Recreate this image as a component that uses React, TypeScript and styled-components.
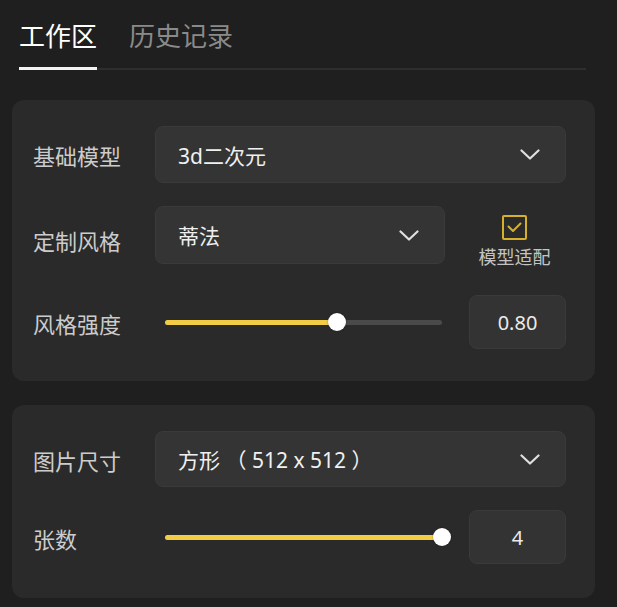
import React, { useState } from "react";
import styled, { createGlobalStyle } from "styled-components";

const GlobalStyle = createGlobalStyle`
  html, body {
    margin: 0;
    padding: 0;
    background: #1f1f1f;
  }
  body {
    font-family: "Noto Sans", "Noto Sans CJK SC", sans-serif;
    color: #e6e6e6;
  }
`;

const Page = styled.div`
  width: 617px;
  min-height: 607px;
  box-sizing: border-box;
  padding: 18px 22px 10px 12px;
  background: #1f1f1f;
`;

const TabList = styled.div`
  display: flex;
  gap: 32px;
  margin: 0 9px 0 7px;
  border-bottom: 2px solid #2e2e2e;
`;

const Tab = styled.div<{ $active?: boolean }>`
  font-size: 26px;
  line-height: 36px;
  padding-bottom: 13px;
  margin-bottom: -2px;
  color: ${(p) => (p.$active ? "#ffffff" : "#8a8a8a")};
  border-bottom: 3px solid ${(p) => (p.$active ? "#f2f2f2" : "transparent")};
  cursor: pointer;
`;

const Panel = styled.div<{ $top?: number; $bottom: number }>`
  margin-top: ${(p) => p.$top ?? 24}px;
  background: #2a2a2a;
  border-radius: 12px;
  padding: 26px 29px ${(p) => p.$bottom}px 21px;
  display: flex;
  flex-direction: column;
  gap: 23px;
`;

const Row = styled.div<{ $h: number }>`
  display: flex;
  align-items: center;
  height: ${(p) => p.$h}px;
`;

const Label = styled.div`
  width: 122px;
  flex-shrink: 0;
  font-size: 22px;
  color: #cccccc;
  padding-top: 1px;
`;

const Select = styled.div<{ $h: number }>`
  flex: 1;
  align-self: flex-start;
  height: ${(p) => p.$h}px;
  box-sizing: border-box;
  display: flex;
  align-items: center;
  justify-content: space-between;
  padding: 0 25px 0 22px;
  background: #343434;
  border: 1px solid #3a3a3a;
  border-radius: 8px;
  font-size: 21px;
  color: #f0f0f0;
  white-space: pre;
  cursor: pointer;
`;

const Side = styled.div`
  width: 103px;
  flex-shrink: 0;
  align-self: flex-start;
  margin: 9px 0 0 18px;
  display: flex;
  flex-direction: column;
  align-items: center;
`;

const CheckBox = styled.div`
  width: 25px;
  height: 25px;
  box-sizing: border-box;
  border: 2px solid #d4b02c;
  border-radius: 2px;
  display: flex;
  align-items: center;
  justify-content: center;
`;

const CheckText = styled.div`
  margin-top: 6px;
  font-size: 18px;
  line-height: 23px;
  color: #c4c4c4;
  white-space: nowrap;
`;

const SliderArea = styled.div`
  flex: 1;
  padding: 0 1px 0 10px;
  display: flex;
  align-items: center;
`;

const Track = styled.div`
  position: relative;
  flex: 1;
  height: 5px;
  border-radius: 3px;
  background: #4a4a4a;
`;

const Fill = styled.div`
  height: 100%;
  border-radius: 3px;
  background: #f2cc44;
`;

const Thumb = styled.div`
  position: absolute;
  top: 50%;
  width: 18px;
  height: 18px;
  margin: -9px 0 0 -9px;
  border-radius: 50%;
  background: #ffffff;
  box-shadow: 0 0 2px rgba(0, 0, 0, 0.4);
`;

const NumberBox = styled.div`
  width: 97px;
  height: 54px;
  flex-shrink: 0;
  margin-left: 26px;
  box-sizing: border-box;
  display: flex;
  align-items: center;
  justify-content: center;
  background: #333333;
  border: 1px solid #3a3a3a;
  border-radius: 8px;
  font-size: 20px;
  color: #eaeaea;
`;

const Chevron = () => (
  <svg width="20" height="11" viewBox="0 0 20 11" fill="none">
    <polyline
      points="1.5,1.5 10,9.5 18.5,1.5"
      stroke="#e0e0e0"
      strokeWidth="2.2"
      strokeLinecap="round"
      strokeLinejoin="round"
    />
  </svg>
);

function Slider({ value, min, max }: { value: number; min: number; max: number }) {
  const pct = ((value - min) / (max - min)) * 100;
  return (
    <SliderArea>
      <Track>
        <Fill style={{ width: `${pct}%` }} />
        <Thumb style={{ left: `${pct}%` }} />
      </Track>
    </SliderArea>
  );
}

export default function App() {
  const [tab, setTab] = useState(0);

  return (
    <Page>
      <GlobalStyle />
      <TabList>
        <Tab $active={tab === 0} onClick={() => setTab(0)}>
          工作区
        </Tab>
        <Tab $active={tab === 1} onClick={() => setTab(1)}>
          历史记录
        </Tab>
      </TabList>

      <Panel $top={30} $bottom={32}>
        <Row $h={57}>
          <Label>基础模型</Label>
          <Select $h={57}>
            <span>3d二次元</span>
            <Chevron />
          </Select>
        </Row>
        <Row $h={66}>
          <Label>定制风格</Label>
          <Select $h={58}>
            <span>蒂法</span>
            <Chevron />
          </Select>
          <Side>
            <CheckBox>
              <svg width="15" height="11" viewBox="0 0 15 11" fill="none">
                <polyline
                  points="1.5,4.5 6,9 13.5,1.5"
                  stroke="#d4b02c"
                  strokeWidth="2"
                  strokeLinecap="round"
                  strokeLinejoin="round"
                />
              </svg>
            </CheckBox>
            <CheckText>模型适配</CheckText>
          </Side>
        </Row>
        <Row $h={54}>
          <Label>风格强度</Label>
          <Slider value={0.62} min={0} max={1} />
          <NumberBox>0.80</NumberBox>
        </Row>
      </Panel>

      <Panel $bottom={34}>
        <Row $h={56}>
          <Label>图片尺寸</Label>
          <Select $h={56}>
            <span>方形 （ 512 x 512 ）</span>
            <Chevron />
          </Select>
        </Row>
        <Row $h={54}>
          <Label>张数</Label>
          <Slider value={4} min={1} max={4} />
          <NumberBox>4</NumberBox>
        </Row>
      </Panel>
    </Page>
  );
}
